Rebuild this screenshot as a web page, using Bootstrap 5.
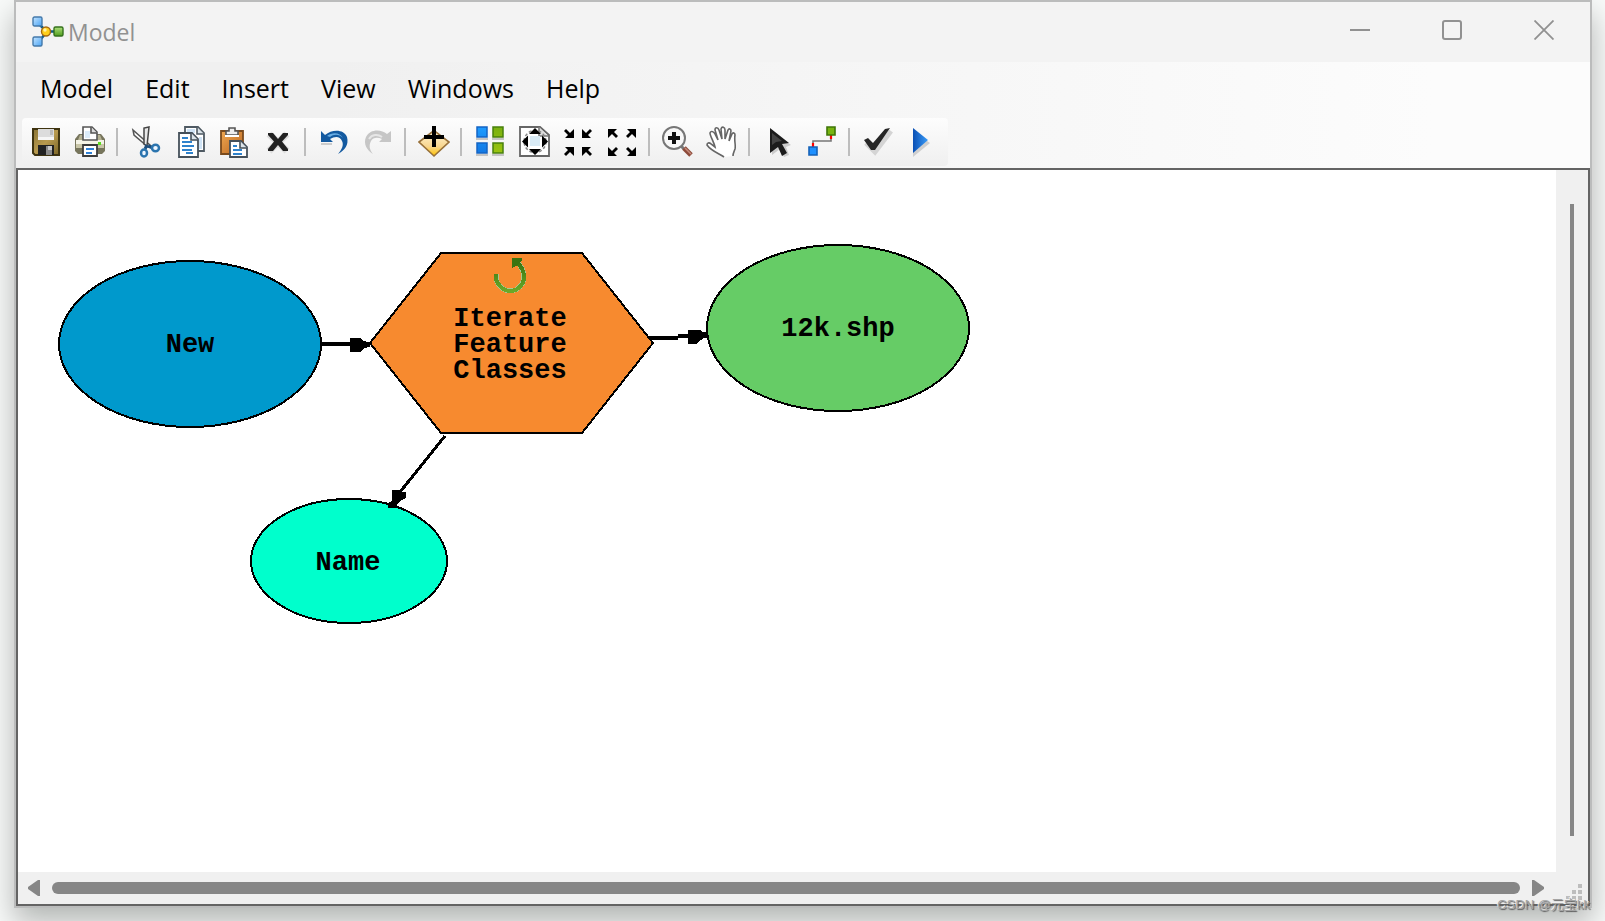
<!DOCTYPE html>
<html lang="en">
<head>
<meta charset="utf-8">
<meta name="viewport" content="width=device-width, initial-scale=1">
<title>Model</title>
<link href="https://cdn.jsdelivr.net/npm/bootstrap@5.3.0/dist/css/bootstrap.min.css" rel="stylesheet">
<script src="https://cdn.jsdelivr.net/npm/bootstrap@5.3.0/dist/js/bootstrap.bundle.min.js"></script>
<style>
  body { background: #f8faf9; font-family: "Open Sans", "Noto Sans", sans-serif; padding: 0 13px 13px 14px; color: #000; }
  .app-window { border: 2px solid #bbbcbc; background: #f0f0f0; box-shadow: 0 14px 28px rgba(0, 6, 4, .28); }
  .title-bar { height: 60px; background: #f3f3f3; }
  .title-text { font-size: 23px; line-height: 32px; color: #919191; }
  .win-btn { width: 92px; height: 56px; border: 0; background: none; padding: 0; color: #919191; }
  .chrome { background: linear-gradient(90deg, #f0f0f0, #f0f0f0 20%, #fcfcfc 90%); }
  .menu-bar { height: 56px; padding: 0 24px 4px; gap: 32px; font-size: 25px; line-height: 36px; }
  .menu-bar a { color: #000; text-decoration: none; }
  .tool-bar { height: 48px; margin: 0 6px 2px; padding: 0 4px 0 2px; border-radius: 4px; background: linear-gradient(#fdfdfd, #efefef); }
  .tool-btn { width: 44px; height: 48px; border: 0; background: none; padding: 0; }
  .tool-sep { width: 2px; height: 28px; margin: 0 6px 0 4px; background: #bdbdbd; }
  .workspace { border: 2px solid #646464; }
  .canvas { background: #fff; }
  .canvas svg { min-height: 480px; }
  .canvas text { font: bold 27px "Liberation Mono", monospace; text-anchor: middle; }
  .v-bar { width: 32px; padding: 34px 14px 36px; }
  .v-thumb { width: 4px; background: #868686; }
  .h-bar { height: 32px; padding: 0 44px 0 10px; gap: 12px; }
  .h-thumb { height: 12px; border-radius: 6px; background: #868686; }
  .grip { right: 6px; bottom: 4px; }
  .watermark { right: 15px; bottom: 6px; font: 13px/20px "Liberation Sans", "Noto Sans CJK SC", sans-serif; color: #a4a4a4; text-shadow: 1px 1px 1px #5c5c5c, -1px -1px 0 #f0f0f0; }
</style>
</head>
<body class="d-flex flex-column min-vh-100 overflow-hidden position-relative">
<svg width="0" height="0" class="position-absolute" aria-hidden="true">
  <defs>
    <linearGradient id="gBlue" x2="1" y2="1"><stop stop-color="#c4e4ff"/><stop offset="1" stop-color="#4aa5f5"/></linearGradient>
    <linearGradient id="gGreen" x2="0" y2="1"><stop stop-color="#aee07c"/><stop offset="1" stop-color="#4f9c1c"/></linearGradient>
    <linearGradient id="gGold" x2="1" y2="1"><stop stop-color="#8a7434"/><stop offset=".5" stop-color="#b89a4e"/><stop offset="1" stop-color="#7a6425"/></linearGradient>
    <linearGradient id="gTan" x2="0" y2="1"><stop stop-color="#fff3d0"/><stop offset=".6" stop-color="#f8d690"/><stop offset="1" stop-color="#ffc400"/></linearGradient>
    <linearGradient id="gBoard" x2="1" y2="1"><stop stop-color="#f0a850"/><stop offset="1" stop-color="#b86420"/></linearGradient>
    <linearGradient id="gTileB" x2="0" y2="1"><stop stop-color="#1e9cff"/><stop offset="1" stop-color="#1278e4"/></linearGradient>
    <linearGradient id="gTileG" x2="0" y2="1"><stop stop-color="#79b010"/><stop offset="1" stop-color="#9ac410"/></linearGradient>
    <linearGradient id="gLoop" x2="0" y2="1"><stop stop-color="#3a7410"/><stop offset="1" stop-color="#6aa828"/></linearGradient>
    <linearGradient id="gPlay" x2="1" y2="0"><stop stop-color="#0a4fb4"/><stop offset="1" stop-color="#3a9cf8"/></linearGradient>
  </defs>
</svg>

<main class="app-window d-flex flex-column flex-grow-1">
  <header class="title-bar d-flex">
    <div class="d-flex align-items-center ps-3">
      <svg width="32" height="32" viewBox="0 0 32 32" aria-hidden="true">
        <path d="M8 9 14 15M9 23 13 18M18 15.500h5" stroke="#0d5a86" stroke-width="2.500" fill="none"/>
        <rect x="1" y="1" width="9" height="9" rx="1.500" fill="url(#gBlue)" stroke="#4479aa" stroke-width="1.400"/>
        <rect x="1" y="21" width="9" height="9" rx="1.500" fill="url(#gBlue)" stroke="#4479aa" stroke-width="1.400"/>
        <circle cx="14" cy="15.500" r="4.500" fill="#ffcf1a" stroke="#a86a10" stroke-width="1.400"/>
        <circle cx="13" cy="14" r="1.700" fill="#fff2a8"/>
        <rect x="22" y="11" width="9" height="9" rx="1.500" fill="url(#gGreen)" stroke="#34701c" stroke-width="1.400"/>
      </svg>
      <span class="title-text ps-1">Model</span>
    </div>
    <div class="ms-auto d-flex">
      <button class="win-btn" type="button" aria-label="Minimize"><svg class="d-block mx-auto" width="20" height="20" viewBox="0 0 20 20"><path d="M0 10h20" stroke="currentColor" stroke-width="2"/></svg></button>
      <button class="win-btn" type="button" aria-label="Maximize"><svg class="d-block mx-auto" width="20" height="20" viewBox="0 0 20 20"><rect x="1" y="1" width="18" height="18" rx="2" fill="none" stroke="currentColor" stroke-width="2"/></svg></button>
      <button class="win-btn" type="button" aria-label="Close"><svg class="d-block mx-auto" width="20" height="20" viewBox="0 0 20 20"><path d="M.5.5l19 19M19.500.5l-19 19" stroke="currentColor" stroke-width="1.800"/></svg></button>
    </div>
  </header>

  <div class="chrome">
    <nav class="menu-bar d-flex align-items-center">
      <a href="#">Model</a><a href="#">Edit</a><a href="#">Insert</a><a href="#">View</a><a href="#">Windows</a><a href="#">Help</a>
    </nav>
    <div class="d-flex">
      <div class="tool-bar d-flex align-items-center" role="toolbar" aria-label="Model tools">
        <button class="tool-btn" type="button" aria-label="Save"><svg width="32" height="32" viewBox="0 0 32 32">
          <path d="M3 3h26v26H5l-2-2z" fill="url(#gGold)" stroke="#3f3410" stroke-width="2"/>
          <path d="M8 3h16v11H8z" fill="#dcdcdc"/><path d="M8 11h16v3H8z" fill="#f6f6f6"/><path d="M20 4h3v5h-3z" fill="#bbb"/>
          <path d="M8 19h16v10H8z" fill="#222"/><path d="M16 20h6v9h-6z" fill="#8b8b8b"/><path d="M18 20h4v4h-4z" fill="#c8c8c8"/></svg></button>
        <button class="tool-btn" type="button" aria-label="Print"><svg width="32" height="32" viewBox="0 0 32 32">
          <path d="M1 13 5 8h22l4 5v12l-3 3H4l-3-3z" fill="#77755c"/>
          <path d="M2 14h28v4H2z" fill="#f4f3e6"/><path d="M2 18h28v4H2z" fill="#c9c6a8"/><path d="M6 9h4v5H4z M22 9h4l2 5h-6z" fill="#b5b294"/>
          <path d="M9 14V1h9l5 5v8z" fill="#fff" stroke="#555" stroke-width="1.600"/><path d="M17 1v6h6" fill="#ddd" stroke="#555" stroke-width="1.600"/><path d="M11 5h5v7h-5z" fill="#dcecfa"/>
          <path d="M24 16h3v3h-3z" fill="#5bdc20"/>
          <path d="M9 19h14v11H9z" fill="#fff" stroke="#3c3c3c" stroke-width="1.800"/><path d="M12 23h8M12 27h6" stroke="#2f82d8" stroke-width="1.800"/></svg></button>
        <span class="tool-sep"></span>
        <button class="tool-btn" type="button" aria-label="Cut"><svg width="32" height="32" viewBox="0 0 32 32">
          <path d="M3 4 4 9 18 21 21 20z" fill="#fff" stroke="#555" stroke-width="1.500"/>
          <path d="M14 2 14 18 17 20 19 1z" fill="#e8e8e8" stroke="#444" stroke-width="1.500"/>
          <path d="M17 19l-2 4M18 20l5 2" stroke="#1c4d7c" stroke-width="3"/>
          <ellipse cx="14" cy="27" rx="3" ry="3.500" fill="#eef6ff" stroke="#2b74ae" stroke-width="2.500"/>
          <ellipse cx="25.500" cy="22" rx="3.500" ry="3.200" fill="#eef6ff" stroke="#2b74ae" stroke-width="2.500"/></svg></button>
        <button class="tool-btn" type="button" aria-label="Copy"><svg width="32" height="32" viewBox="0 0 32 32">
          <path d="M11 1h13l6 6v18H11z" fill="#fff" stroke="#4f5a63" stroke-width="1.800"/><path d="M23 1v7h7" fill="#dbe4ea" stroke="#4f5a63" stroke-width="1.600"/><path d="M13 3h8v4h-8z M25 11h3v12h-3z" fill="#cfe3f5"/>
          <path d="M5 7h13l6 6v18H5z" fill="#fff" stroke="#45505a" stroke-width="1.800"/><path d="M17 7v7h7" fill="#dbe4ea" stroke="#45505a" stroke-width="1.600"/>
          <path d="M8 12h6M8 16h10M8 20h12M8 24h10M12 27h7" stroke="#2f82cc" stroke-width="1.800"/></svg></button>
        <button class="tool-btn" type="button" aria-label="Paste"><svg width="32" height="32" viewBox="0 0 32 32">
          <path d="M3 5h22v23H3z" fill="url(#gBoard)" stroke="#7a4a1c" stroke-width="1.800"/>
          <path d="M8 9V5h3V2h6v3h3v4z" fill="#eee" stroke="#555" stroke-width="1.600"/><path d="M7 10h14" stroke="#fff" stroke-width="2"/>
          <path d="M12 15h11l6 6v10H12z" fill="#fff" stroke="#45505a" stroke-width="1.800"/><path d="M22 15v7h7" fill="#dbe4ea" stroke="#45505a" stroke-width="1.600"/>
          <path d="M15 20h4M15 24h9M15 28h9" stroke="#2f82cc" stroke-width="1.800"/></svg></button>
        <button class="tool-btn" type="button" aria-label="Delete"><svg width="32" height="32" viewBox="0 0 32 32">
          <path d="M7 8 25 25M25 8 7 25" stroke="#ddd" stroke-width="7"/><path d="M6 7h5l5 6 5-6h5v2l-6 6.500 6 7.500v2h-5l-5-6-5 6H6v-2l6-7.500-6-6.500z" fill="#222"/></svg></button>
        <span class="tool-sep"></span>
        <button class="tool-btn" type="button" aria-label="Undo"><svg width="32" height="32" viewBox="0 0 32 32">
          <path d="M3 18h11" stroke="#ccc" stroke-width="2"/><path d="M3 5l4 4C14 3 26 3 29 11c2 8-2 13-9 17 4-5 6-9 4-13-2-5-7-5-12-2l3 3H3z" fill="#145aa0"/><path d="M9 10c5-4 13-4 16 2-4-4-9-4-13-1z" fill="#6aaee4"/></svg></button>
        <button class="tool-btn" type="button" aria-label="Redo"><svg width="32" height="32" viewBox="0 0 32 32">
          <path d="M29 5l-4 3C19 3 8 3 4 11c-3 7 1 13 7 17-4-5-4-9-2-13 2-4 7-4 11-2l-3 3h12z" fill="#c6c6c6"/><path d="M7 13c3-5 9-5 13-2" fill="none" stroke="#e6e6e6" stroke-width="2"/></svg></button>
        <span class="tool-sep"></span>
        <button class="tool-btn" type="button" aria-label="Add data or tool"><svg width="32" height="32" viewBox="0 0 32 32">
          <path d="M1 16 14 6h4l13 10-15 14z" fill="url(#gTan)" stroke="#98713a" stroke-width="1.600"/><path d="M14 0h4v9h8v4h-8v8h-4v-8H6V9h8z" fill="#000"/></svg></button>
        <span class="tool-sep"></span>
        <button class="tool-btn" type="button" aria-label="Auto layout"><svg width="32" height="32" viewBox="0 0 32 32">
          <path d="M2 13h12M18 13h12M2 29h12M18 29h12" stroke="#c4c4c4" stroke-width="2"/>
          <path d="M3 1h10v10H3zM3 17h10v10H3z" fill="url(#gTileB)" stroke="#1464c4" stroke-width="1.500"/><path d="M19 1h10v10H19zM19 17h10v10H19z" fill="url(#gTileG)" stroke="#48800c" stroke-width="1.500"/></svg></button>
        <button class="tool-btn" type="button" aria-label="Full extent"><svg width="32" height="32" viewBox="0 0 32 32">
          <path d="M2 1h20l9 8v21H2z" fill="#fff" stroke="#666" stroke-width="1.800"/><path d="M21 1v9h9" fill="#ddd" stroke="#777" stroke-width="1.600"/>
          <circle cx="17" cy="15.500" r="11" fill="none" stroke="#888" stroke-width="1.500" stroke-dasharray="3 2"/><path d="M12 10h10v10H12z" fill="#d8eaf5"/>
          <path d="M17 2l6 6H11zM17 29l6-6H11zM4 15.500l6-6v12zM30 15.500l-6-6v12z" fill="#000"/></svg></button>
        <button class="tool-btn" type="button" aria-label="Fixed zoom in"><svg width="32" height="32" viewBox="0 0 32 32">
          <path d="M12 3v9H3l3-3-4-4 2-2 4 4zM20 3v9h9l-3-3 4-4-2-2-4 4zM12 30v-9H3l3 3-4 4 2 2 4-4zM20 30v-9h9l-3 3 4 4-2 2-4-4z" fill="#000"/></svg></button>
        <button class="tool-btn" type="button" aria-label="Fixed zoom out"><svg width="32" height="32" viewBox="0 0 32 32">
          <path d="M2 12V3h9L8 6l4 4-2 2-4-4zM30 12V3h-9l3 3-4 4 2 2 4-4zM2 21v9h9l-3-3 4-4-2-2-4 4zM30 21v9h-9l3-3-4-4 2-2 4 4z" fill="#000"/></svg></button>
        <span class="tool-sep"></span>
        <button class="tool-btn" type="button" aria-label="Zoom in"><svg width="32" height="32" viewBox="0 0 32 32">
          <path d="M19 20l3 3" stroke="#777" stroke-width="3"/><path d="M22 22l7 7" stroke="#8d4a3a" stroke-width="5"/><path d="M23 22l6 6" stroke="#c4897a" stroke-width="1.500"/>
          <circle cx="12" cy="12" r="11" fill="#f8f8f8" stroke="#777" stroke-width="2"/><path d="M10 6h4v4h4v4h-4v4h-4v-4H6v-4h4z" fill="#111"/></svg></button>
        <button class="tool-btn" type="button" aria-label="Pan"><svg width="32" height="32" viewBox="0 0 32 32">
          <path d="M18 31C14 28 5 25 1 19c0-2 2-3 4-1l4 3C8 16 4 10 4 7c1-3 4-1 5 1l3 6L9 4c0-3 3-3 4 0l3 9-1-10c1-3 4-2 4 1v9l3-9c1-2 3-1 3 1l-2 10 3-7c1-2 3-1 3 1-1 6 1 10 0 14-1 3-2 4-2 7" fill="#fff" stroke="#666" stroke-width="1.600"/></svg></button>
        <span class="tool-sep"></span>
        <button class="tool-btn" type="button" aria-label="Select"><svg width="32" height="32" viewBox="0 0 32 32">
          <path d="M9 4l20 15-5 2 3 8-5 2-4-8-8 6z" fill="#ccc"/><path d="M8 2 27 17l-7 1 5 9-5 3-4-9-8 6z" fill="#1c1c1c"/><path d="M10 7l10 8-6 1-4 3z" fill="#444"/></svg></button>
        <button class="tool-btn" type="button" aria-label="Connect"><svg width="32" height="32" viewBox="0 0 32 32">
          <path d="M7 20v-5h18v-5" fill="none" stroke="#777" stroke-width="1.600"/><path d="M7 17v5M25 8v5" stroke="#f00" stroke-width="2.200"/>
          <path d="M21 1h8v8h-8z" fill="#78b410" stroke="#3f7608" stroke-width="1.600"/><path d="M3 21h8v8H3z" fill="#1e90ff" stroke="#1462b8" stroke-width="1.600"/></svg></button>
        <span class="tool-sep"></span>
        <button class="tool-btn" type="button" aria-label="Validate"><svg width="32" height="32" viewBox="0 0 32 32">
          <path d="M4 17l9 9L29 5" fill="none" stroke="#d4d4d4" stroke-width="5"/><path d="M2 14l4-2 5 5L23 3l5-1-15 22h-4z" fill="#262626"/></svg></button>
        <button class="tool-btn" type="button" aria-label="Run"><svg width="32" height="32" viewBox="0 0 32 32">
          <path d="M7 5l17 12L7 31z" fill="#cfcfcf"/><path d="M7 2l15 12L7 27z" fill="url(#gPlay)"/></svg></button>
      </div>
    </div>
  </div>

  <section class="workspace d-flex flex-column flex-grow-1 position-relative">
    <div class="d-flex flex-grow-1">
      <div class="canvas d-flex flex-grow-1">
        <svg class="w-100 h-100" role="img" aria-label="Model diagram" shape-rendering="crispEdges">
          <!-- connectors -->
          <g stroke="#000" fill="none">
            <path d="M304 174h36" stroke-width="4"/>
            <path d="M631 168h29M660 166h12" stroke-width="4"/>
            <path d="M427 266 382 322" stroke-width="3"/>
          </g>
          <!-- data and tool elements -->
          <g stroke="#000" stroke-width="2">
            <ellipse cx="172" cy="174" rx="131" ry="83" fill="#0099cc"/>
            <path d="M352 173 423 83H564L635 173 564 263H423z" fill="#f78a2f"/>
            <ellipse cx="820" cy="158" rx="131" ry="83" fill="#66cc66"/>
            <ellipse cx="331" cy="391" rx="98" ry="62" fill="#00ffcc"/>
          </g>
          <path d="M332 168h10l4 3 6 2v4l-6 1-4 4h-10z"/>
          <path d="M670 160h12l2 2h6v6h-4l-6 4-2 2h-8z"/>
          <path d="M374 320h8l2 2h4v6l-4 2-4 3-2 5h-8v-5l4-2z"/>
          <!-- iterator symbol -->
          <path d="M478 104v5C480 116 486 121 492 121c8 0 14-7 14-14 0-6-3-11-7-15" fill="none" stroke="#a8c890" stroke-width="5"/>
          <path d="M478 104v5C480 116 486 121 492 121c8 0 14-7 14-14 0-6-3-11-7-15" fill="none" stroke="url(#gLoop)" stroke-width="4"/>
          <path d="M494 88h10v3l-3 2-3 3-4 2z" fill="#3a7410"/>
          <text x="172" y="182">New</text>
          <text x="492" y="156">Iterate</text>
          <text x="492" y="182">Feature</text>
          <text x="492" y="208">Classes</text>
          <text x="820" y="166">12k.shp</text>
          <text x="330" y="400">Name</text>
        </svg>
      </div>
      <div class="v-bar d-flex"><div class="v-thumb"></div></div>
    </div>
    <div class="h-bar d-flex align-items-center">
      <svg width="12" height="16" viewBox="0 0 12 16" aria-hidden="true"><path d="M12 0v16H10L0 9V7L10 0z" fill="#868686"/></svg>
      <div class="h-thumb flex-grow-1"></div>
      <svg width="12" height="16" viewBox="0 0 12 16" aria-hidden="true"><path d="M0 0v16h2l10-7V7L2 0z" fill="#868686"/></svg>
    </div>
    <svg class="grip position-absolute" width="16" height="16" viewBox="0 0 16 16" aria-hidden="true"><path d="M12 0h4v4h-4zM6 6h4v4H6zM12 6h4v4h-4zM0 12h4v4H0zM6 12h4v4H6zM12 12h4v4h-4z" fill="#bdbdbd"/></svg>
  </section>
</main>
<div class="watermark position-absolute">CSDN @元宝kk</div>
</body>
</html>
